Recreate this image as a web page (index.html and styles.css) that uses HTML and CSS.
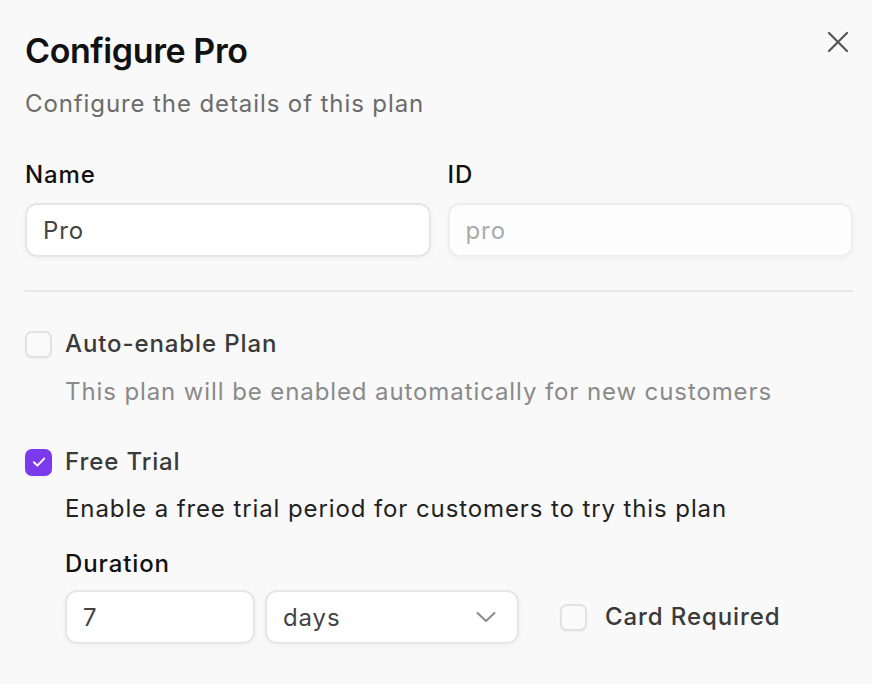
FILE: index.html
```html
<!DOCTYPE html>
<html>
<head>
<meta charset="utf-8">
<link rel="stylesheet" href="styles.css">
</head>
<body>
<div class="dialog">
  <button class="close" aria-label="Close">
    <svg width="24" height="24" viewBox="0 0 24 24" fill="none" stroke="#555" stroke-width="2.2" stroke-linecap="round"><path d="M3 3L21 21M21 3L3 21"/></svg>
  </button>
  <h1 class="title">Configure Pro</h1>
  <p class="subtitle">Configure the details of this plan</p>

  <div class="fields">
    <div class="field">
      <label class="label">Name</label>
      <div class="input">Pro</div>
    </div>
    <div class="field">
      <label class="label">ID</label>
      <div class="input input-disabled">pro</div>
    </div>
  </div>

  <hr class="divider">

  <div class="option">
    <div class="check-row">
      <span class="checkbox"></span>
      <span class="option-title">Auto-enable Plan</span>
    </div>
    <p class="option-desc muted">This plan will be enabled automatically for new customers</p>
  </div>

  <div class="option option-trial">
    <div class="check-row">
      <span class="checkbox checked">
        <svg width="16" height="16" viewBox="0 0 14 14" fill="none" stroke="#fff" stroke-width="1.7" stroke-linecap="round" stroke-linejoin="round"><path d="M2.5 7.2L5.6 10.2L11.5 4"/></svg>
      </span>
      <span class="option-title">Free Trial</span>
    </div>
    <p class="option-desc">Enable a free trial period for customers to try this plan</p>
    <div class="duration">
      <label class="label">Duration</label>
      <div class="duration-row">
        <div class="input input-num">7</div>
        <div class="input input-select">
          <span>days</span>
          <svg width="20" height="20" viewBox="0 0 20 20" fill="none" stroke="#8a8a8a" stroke-width="2" stroke-linecap="round" stroke-linejoin="round"><path d="M1.5 6L10 14L18.5 6"/></svg>
        </div>
        <div class="check-row card-req">
          <span class="checkbox"></span>
          <span class="option-title">Card Required</span>
        </div>
      </div>
    </div>
  </div>
</div>
</body>
</html>
```

FILE: styles.css
```css
* { box-sizing: border-box; }
html, body { margin: 0; padding: 0; }
body {
  background: #f9f9f9;
  font-family: Inter, "Noto Sans", sans-serif;
  color: #111;
  width: 872px;
  height: 684px;
  overflow: hidden;
}
.dialog {
  position: relative;
  padding: 31px 19px 0 25px;
  letter-spacing: 0.9px;
}
.close {
  position: absolute;
  top: 30px;
  right: 22px;
  border: 0;
  background: none;
  padding: 0;
  width: 24px;
  height: 24px;
}
.title {
  margin: 0;
  font-size: 34px;
  line-height: 40px;
  font-weight: 600;
  color: #111;
  letter-spacing: -0.4px;
}
.subtitle {
  margin: 18px 0 0;
  font-size: 24px;
  line-height: 30px;
  color: #6b6b6b;
}
.fields {
  display: grid;
  grid-template-columns: 1fr 1fr;
  gap: 17px;
  margin-top: 41px;
}
.field { display: flex; flex-direction: column; gap: 13px; }
.label {
  font-size: 24px;
  line-height: 30px;
  font-weight: 500;
  color: #111;
}
.input {
  height: 54px;
  background: #fff;
  border: 2px solid #e6e6e6;
  border-radius: 12px;
  box-shadow: 0 2px 6px rgba(0,0,0,0.04);
  padding: 0 16px;
  display: flex;
  align-items: center;
  font-size: 24px;
  color: #444;
}
.input-disabled {
  background: #fdfdfd;
  border-color: #eeeeee;
  color: #aaa;
}
.divider {
  border: 0;
  border-top: 2px solid #e8e8e8;
  margin: 33px 0 0;
}
.option { margin-top: 37px; }
.option-trial { margin-top: 40px; }
.check-row {
  display: flex;
  align-items: center;
  gap: 13px;
}
.checkbox {
  width: 27px;
  height: 27px;
  border: 2px solid #e2e2e2;
  border-radius: 7px;
  background: #fafafa;
  box-shadow: 0 1px 2px rgba(0,0,0,0.05);
  display: flex;
  align-items: center;
  justify-content: center;
  flex: none;
}
.checkbox.checked {
  background: #7c3aed;
  border-color: #7c3aed;
}
.option-title {
  font-size: 24px;
  line-height: 30px;
  font-weight: 500;
  color: #3a3a3a;
}
.option-desc {
  margin: 18px 0 0 40px;
  font-size: 24px;
  line-height: 30px;
  color: #222;
}
.option-trial .option-desc { margin-top: 17px; }
.option-desc.muted { color: #8a8a8a; }
.duration {
  margin: 25px 0 0 40px;
  display: flex;
  flex-direction: column;
  gap: 11px;
}
.duration-row {
  display: flex;
  align-items: center;
  gap: 10px;
}
.input-num { width: 190px; }
.input-select {
  width: 254px;
  justify-content: space-between;
  padding-right: 21px;
}
.card-req { margin-left: 31px; gap: 18px; }
```
